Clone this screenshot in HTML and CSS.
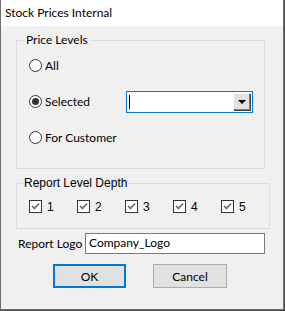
FILE: index.html
```html
<!DOCTYPE html>
<html lang="en">
<head>
    <meta charset="UTF-8">
    <title>Stock Prices Internal</title>
    <link rel="stylesheet" href="styles.css">
</head>
<body>

<div class="window">
    <div class="titlebar">Stock Prices Internal</div>

    <div class="content">
        <fieldset class="group levels">
            <legend>Price Levels</legend>
            <div class="group-body">
                <label class="radio-row">
                    <span class="radio"></span>All
                </label>
                <div class="radio-row">
                    <label class="radio-label"><span class="radio checked"></span>Selected</label>
                    <div class="combo">
                        <span class="caret"></span>
                        <span class="drop"><span class="arrow"></span></span>
                    </div>
                </div>
                <label class="radio-row">
                    <span class="radio"></span>For Customer
                </label>
            </div>
        </fieldset>

        <fieldset class="group depth">
            <legend>Report Level Depth</legend>
            <div class="group-body checks">
                <label class="check"><span class="box"><svg width="11" height="11" viewBox="0 0 11 11"><polyline points="2,5 4.5,7.5 9,2.5" fill="none" stroke="#555" stroke-width="1.3"/></svg></span>1</label>
                <label class="check"><span class="box"><svg width="11" height="11" viewBox="0 0 11 11"><polyline points="2,5 4.5,7.5 9,2.5" fill="none" stroke="#555" stroke-width="1.3"/></svg></span>2</label>
                <label class="check"><span class="box"><svg width="11" height="11" viewBox="0 0 11 11"><polyline points="2,5 4.5,7.5 9,2.5" fill="none" stroke="#555" stroke-width="1.3"/></svg></span>3</label>
                <label class="check"><span class="box"><svg width="11" height="11" viewBox="0 0 11 11"><polyline points="2,5 4.5,7.5 9,2.5" fill="none" stroke="#555" stroke-width="1.3"/></svg></span>4</label>
                <label class="check"><span class="box"><svg width="11" height="11" viewBox="0 0 11 11"><polyline points="2,5 4.5,7.5 9,2.5" fill="none" stroke="#555" stroke-width="1.3"/></svg></span>5</label>
            </div>
        </fieldset>

        <div class="logo-row">
            <span class="logo-label">Report Logo</span>
            <div class="textbox">Company_Logo</div>
        </div>

        <div class="buttons">
            <button class="btn default">OK</button>
            <button class="btn cancel">Cancel</button>
        </div>
    </div>
</div>

</body>
</html>
```

FILE: styles.css
```css
body {
    margin: 0;
    background-color: #4b4b4b;
    font-family: Lato, sans-serif;
    font-size: 12px;
    color: #000;
}
.window {
    width: 282px;
    height: 309px;
    background-color: #f0f0f0;
    border: 1px solid #6e6e6e;
    border-top: none;
}
.titlebar {
    height: 26px;
    line-height: 26px;
    background-color: white;
    padding-left: 4px;
    font-size: 12px;
}
.content {
    padding: 6px 0 0 15px;
}
.group {
    width: 249px;
    margin: 0;
    border: 1px solid #dcdcdc;
    padding: 0;
    box-sizing: border-box;
}
.group legend {
    padding: 0 2px;
    margin-left: 7px;
    line-height: 16px;
}
.group-body {
    padding-left: 12px;
}
.levels {
    height: 137px;
}
.radio-row {
    display: flex;
    align-items: center;
    height: 21px;
    margin-top: 7px;
}
.radio-row + .radio-row {
    margin-top: 15px;
}
.radio-label {
    display: flex;
    align-items: center;
    width: 97px;
}
.radio {
    width: 11px;
    height: 11px;
    border: 1px solid #333;
    border-radius: 50%;
    background: white;
    margin-right: 3px;
    position: relative;
}
.radio.checked::after {
    content: "";
    position: absolute;
    left: 2px;
    top: 2px;
    width: 7px;
    height: 7px;
    border-radius: 50%;
    background: #333;
}
.combo {
    width: 127px;
    height: 22px;
    border: 1px solid #0078d7;
    background: white;
    display: flex;
    align-items: center;
    justify-content: space-between;
    box-sizing: border-box;
    padding: 0 2px 0 2px;
}
.caret {
    width: 1px;
    height: 14px;
    background: black;
}
.drop {
    width: 17px;
    height: 17px;
    box-sizing: border-box;
    background: #e1e1e1;
    border: 1px solid;
    border-color: #fff #808080 #808080 #fff;
    box-shadow: 1px 1px 0 #404040;
    display: flex;
    align-items: center;
    justify-content: center;
}
.arrow {
    width: 0;
    height: 0;
    border-left: 4px solid transparent;
    border-right: 4px solid transparent;
    border-top: 4px solid black;
}
.depth {
    margin-top: 6px;
    height: 54px;
    font-family: "Liberation Sans", Arial, sans-serif;
    font-size: 12px;
}
.depth legend {
    margin-left: 6px;
    padding: 0 1px;
}
.checks {
    display: flex;
    margin-top: 9px;
}
.check {
    display: flex;
    align-items: center;
    width: 48px;
    height: 13px;
}
.box {
    width: 11px;
    height: 11px;
    border: 1px solid #333;
    background: white;
    margin-right: 5px;
    display: flex;
}
.logo-row {
    display: flex;
    align-items: center;
    margin-top: 4px;
    padding-left: 2px;
}
.logo-label {
    width: 67px;
}
.textbox {
    width: 180px;
    height: 21px;
    box-sizing: border-box;
    border: 1px solid #7a7a7a;
    background: white;
    padding-left: 3px;
    line-height: 18px;
}
.buttons {
    display: flex;
    margin: 10px 0 0 37px;
    gap: 27px;
}
.btn {
    width: 73px;
    height: 24px;
    background: #e1e1e1;
    border: 1px solid #adadad;
    font-family: Lato, sans-serif;
    font-size: 12px;
    padding: 0;
}
.btn.default {
    border: 2px solid #0078d7;
}
.btn.cancel {
    width: 74px;
}
```
